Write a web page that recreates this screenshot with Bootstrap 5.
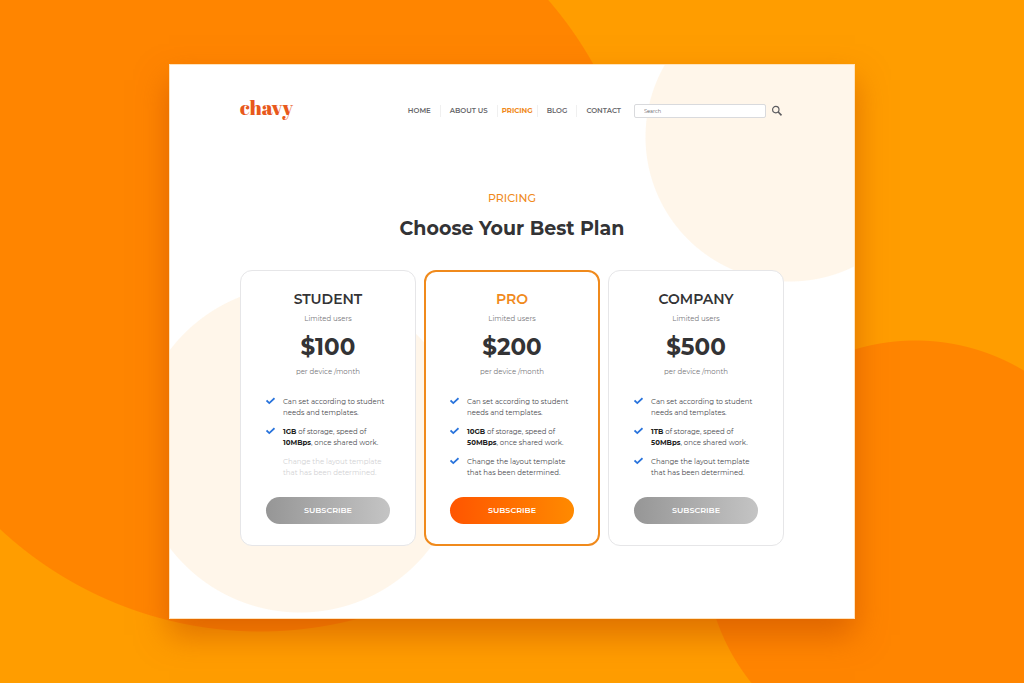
<!DOCTYPE html>
<html lang="en">
<head>
<meta charset="utf-8">
<meta name="viewport" content="width=device-width, initial-scale=1">
<title>chavy – Pricing</title>
<link href="https://cdn.jsdelivr.net/npm/bootstrap@5.3.0/dist/css/bootstrap.min.css" rel="stylesheet">
<style>
  :root { --brand: #f08a1c; --ink: #333335; }
  body {
    font-family: Montserrat, Inter, "Open Sans", sans-serif;
    color: var(--ink);
    background:
      radial-gradient(circle at 25.4% 250px, #ff8500 381px, transparent 382px),
      radial-gradient(circle at 89.4% 551px, #ff8500 210px, transparent 211px),
      #ff9d00;
  }
  .site-frame {
    width: 67%;
    padding: 32px 70px 72px;
    border: 1px solid #ffe3bd;
    box-shadow: 0 16px 30px rgba(190, 70, 0, .5);
    background:
      radial-gradient(circle at 620px 72px, #fff6ea 144px, transparent 145px),
      radial-gradient(circle at 130px 384px, #fff6ea 163px, transparent 164px),
      #fff;
  }
  .brand-name {
    font: 400 20px/22px "Abril Fatface", "Playfair Display", "Liberation Serif", serif;
    color: #e8591c; padding-bottom: 6px;
  }
  .site-nav .nav-link {
    font-size: 7px; line-height: 12px; font-weight: 600;
    color: #66666a; padding: 0 9px;
  }
  .site-nav .nav-item + .nav-item { border-left: 1px solid #f0f0f0; }
  .site-nav .nav-link.active { color: var(--brand); font-weight: 700; padding: 0 4px; }
  .search-box {
    width: 132px; height: 14px; min-height: 0; padding: 0 9px;
    font-size: 5px; line-height: 12px; border-color: #d9dadd; border-radius: 2px;
  }
  .search-box::placeholder { color: #606064; }
  .heading-block { padding: 66px 0 25px; }
  .eyebrow { font-size: 11px; line-height: 14px; font-weight: 500; color: var(--brand); }
  .headline { font-size: 19px; line-height: 32px; font-weight: 700; }
  .plan { border: 1px solid #e6e6e8; border-radius: 12px; padding: 18px 25px 21px; }
  .plan-featured { border: 2px solid var(--brand); padding: 17px 24px 20px; }
  .plan-name { font-size: 14px; line-height: 20px; font-weight: 600; }
  .plan-featured .plan-name { color: var(--brand); }
  .plan-note { font-size: 7px; line-height: 12px; color: #77777b; }
  .plan-price { font-size: 23px; line-height: 29px; font-weight: 700; }
  .plan-term { margin-bottom: 18px; }
  .plan-features { font-size: 7px; line-height: 11px; color: #4a4a4e; margin-bottom: 19px; }
  .plan-features strong { color: #222; }
  .plan-features .tick { width: 9px; height: 8px; margin-top: 1px; }
  .plan-features .unavailable { color: #d2d2d4; }
  .btn-plan {
    font-size: 8px; line-height: 27px; font-weight: 600; color: #fff; padding: 0; border: 0;
    background: linear-gradient(90deg, #969696, #c4c4c4);
  }
  .btn-plan:hover { color: #fff; }
  .plan-featured .btn-plan { background: linear-gradient(90deg, #ff5500, #ff8a00); }
</style>
</head>
<body class="min-vh-100 d-flex align-items-center justify-content-center">
<svg class="d-none" aria-hidden="true"><symbol id="tick" viewBox="0 0 9 8"><path d="M.5 3.4 3.3 6.1 8.5 1.2" fill="none" stroke="#2873dc" stroke-width="1.8"/></symbol></svg>
<div class="site-frame">
  <header class="d-flex align-items-center">
    <a href="#" class="brand-name text-decoration-none">chavy</a>
    <nav class="ms-auto site-nav" aria-label="Main">
      <ul class="nav flex-nowrap">
        <li class="nav-item"><a class="nav-link" href="#">HOME</a></li>
        <li class="nav-item"><a class="nav-link" href="#">ABOUT US</a></li>
        <li class="nav-item"><a class="nav-link active" aria-current="page" href="#">PRICING</a></li>
        <li class="nav-item"><a class="nav-link" href="#">BLOG</a></li>
        <li class="nav-item"><a class="nav-link" href="#">CONTACT</a></li>
      </ul>
    </nav>
    <form class="d-flex align-items-center ms-1" role="search">
      <input class="form-control search-box" type="search" placeholder="Search" aria-label="Search">
      <button class="btn border-0 p-0 ms-1 d-flex" type="button" aria-label="Search">
        <svg width="14" height="14" viewBox="0 0 14 14" fill="none" stroke="#5c5c60"><circle cx="5.8" cy="5.6" r="3.2" stroke-width="1.2"/><path d="m8.2 8 3.3 3.4" stroke-width="1.6"/></svg>
      </button>
    </form>
  </header>
  <main>
    <div class="text-center heading-block">
      <p class="eyebrow mb-2">PRICING</p>
      <h1 class="headline mb-0">Choose Your Best Plan</h1>
    </div>
    <div class="row g-2 mt-0">
      <div class="col-4 mt-0">
        <section class="card plan h-100">
          <h2 class="plan-name text-center mb-1">STUDENT</h2>
          <p class="plan-note text-center mb-2">Limited users</p>
          <p class="plan-price text-center mb-1">$100</p>
          <p class="plan-note plan-term text-center">per device /month</p>
          <ul class="plan-features list-unstyled d-flex flex-column gap-2">
            <li class="d-flex gap-2"><svg class="tick flex-shrink-0"><use href="#tick"/></svg><span>Can set according to student<br>needs and templates.</span></li>
            <li class="d-flex gap-2"><svg class="tick flex-shrink-0"><use href="#tick"/></svg><span><strong>1GB</strong> of storage, speed of<br><strong>10MBps</strong>, once shared work.</span></li>
            <li class="d-flex gap-2 unavailable"><span class="tick flex-shrink-0"></span><span>Change the layout template<br>that has been determined.</span></li>
          </ul>
          <button type="button" class="btn btn-plan rounded-pill">SUBSCRIBE</button>
        </section>
      </div>
      <div class="col-4 mt-0">
        <section class="card plan plan-featured h-100">
          <h2 class="plan-name text-center mb-1">PRO</h2>
          <p class="plan-note text-center mb-2">Limited users</p>
          <p class="plan-price text-center mb-1">$200</p>
          <p class="plan-note plan-term text-center">per device /month</p>
          <ul class="plan-features list-unstyled d-flex flex-column gap-2">
            <li class="d-flex gap-2"><svg class="tick flex-shrink-0"><use href="#tick"/></svg><span>Can set according to student<br>needs and templates.</span></li>
            <li class="d-flex gap-2"><svg class="tick flex-shrink-0"><use href="#tick"/></svg><span><strong>10GB</strong> of storage, speed of<br><strong>50MBps</strong>, once shared work.</span></li>
            <li class="d-flex gap-2"><svg class="tick flex-shrink-0"><use href="#tick"/></svg><span>Change the layout template<br>that has been determined.</span></li>
          </ul>
          <button type="button" class="btn btn-plan rounded-pill">SUBSCRIBE</button>
        </section>
      </div>
      <div class="col-4 mt-0">
        <section class="card plan h-100">
          <h2 class="plan-name text-center mb-1">COMPANY</h2>
          <p class="plan-note text-center mb-2">Limited users</p>
          <p class="plan-price text-center mb-1">$500</p>
          <p class="plan-note plan-term text-center">per device /month</p>
          <ul class="plan-features list-unstyled d-flex flex-column gap-2">
            <li class="d-flex gap-2"><svg class="tick flex-shrink-0"><use href="#tick"/></svg><span>Can set according to student<br>needs and templates.</span></li>
            <li class="d-flex gap-2"><svg class="tick flex-shrink-0"><use href="#tick"/></svg><span><strong>1TB</strong> of storage, speed of<br><strong>50MBps</strong>, once shared work.</span></li>
            <li class="d-flex gap-2"><svg class="tick flex-shrink-0"><use href="#tick"/></svg><span>Change the layout template<br>that has been determined.</span></li>
          </ul>
          <button type="button" class="btn btn-plan rounded-pill">SUBSCRIBE</button>
        </section>
      </div>
    </div>
  </main>
</div>
<script src="https://cdn.jsdelivr.net/npm/bootstrap@5.3.0/dist/js/bootstrap.bundle.min.js"></script>
</body>
</html>
